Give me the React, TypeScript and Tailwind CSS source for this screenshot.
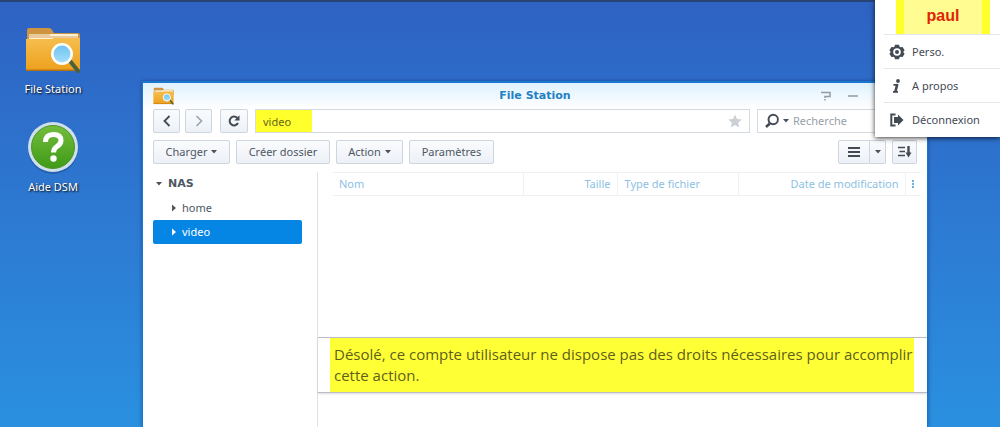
import type { ReactNode } from 'react';

interface ToolButtonProps {
  children: ReactNode;
  label?: string;
  className?: string;
}

const ToolButton = ({ children, label, className = '' }: ToolButtonProps) => (
  <button
    aria-label={label}
    className={`flex h-6 items-center justify-center gap-1 rounded-xs border border-[#cdd5df] bg-linear-to-b from-[#fafbfd] to-[#edf1f7] text-[#4e5762] ${className}`}
  >
    {children}
  </button>
);

const Caret = ({ className = 'fill-[#4a525c]' }: { className?: string }) => (
  <svg viewBox="0 0 6 4" className={`h-1 w-1.5 shrink-0 ${className}`}>
    <path d="M0 0h6L3 3.500z" />
  </svg>
);

const TreeArrow = () => (
  <svg viewBox="0 0 4 8" className="h-2 w-1 shrink-0 fill-current">
    <path d="M0 .5v7L4 4z" />
  </svg>
);

const FolderIcon = ({ className = '' }: { className?: string }) => (
  <svg viewBox="0 0 56 46" className={className}>
    <defs>
      <linearGradient id="folderFront" x1="0" y1="0" x2="0" y2="1">
        <stop offset="0%" stopColor="#f6be4e" />
        <stop offset="100%" stopColor="#eda01c" />
      </linearGradient>
      <linearGradient id="lens" x1="0" y1="0" x2="0" y2="1">
        <stop offset="0%" stopColor="#6cc1f1" />
        <stop offset="100%" stopColor="#a6e0fb" />
      </linearGradient>
    </defs>
    <path d="M2 3q0-2 2-2h20q2 0 3 2l2 3h24q2 0 2 2v12H2z" fill="#cf9440" />
    <path d="M4 7h49v8H4z" fill="#fff1d2" />
    <path d="M4 8h21M3 10h51" stroke="#d3a262" strokeWidth="1" />
    <path d="M1 12h26l2-1h26v31q0 2-2 2H3q-2 0-2-2z" fill="url(#folderFront)" />
    <path d="M1 43.300h54" stroke="#b97312" strokeWidth="1.500" />
    <path d="M45 34l8 10" stroke="#47603f" strokeWidth="4" strokeLinecap="round" />
    <circle cx="37" cy="27" r="9.700" fill="url(#lens)" stroke="#fffdf4" strokeWidth="2.600" />
  </svg>
);

const HelpIcon = () => (
  <svg viewBox="0 0 52 54" className="h-[54px] w-[52px]">
    <defs>
      <linearGradient id="helpFill" x1="0" y1="0" x2="0" y2="1">
        <stop offset="0%" stopColor="#74bd3c" />
        <stop offset="100%" stopColor="#3f9a18" />
      </linearGradient>
    </defs>
    <circle cx="26" cy="28" r="25" fill="#1b4a94" opacity=".5" />
    <circle cx="26" cy="26" r="25" fill="#cfe0ea" />
    <circle cx="26" cy="26" r="21.500" fill="url(#helpFill)" stroke="#4c962c" strokeWidth="1" />
    <path d="M18.500 21q0-7.500 8-7.500 7.500 0 7.500 6 0 3.500-3.500 5.500-4 2.500-4 6.500" fill="none" stroke="#fff" strokeWidth="5" />
    <circle cx="26.500" cy="37.500" r="3.200" fill="#fff" />
  </svg>
);

const GearIcon = () => (
  <svg viewBox="0 0 16 16" className="h-4 w-4 shrink-0">
    <path
      fillRule="evenodd"
      fill="#434a54"
      d="M6 .8h4l.6 1.900 1 .6 2-.4 2 3.400-1.400 1.700 1.400 1.700-2 3.400-2-.4-1 .6-.6 1.900H6l-.6-1.900-1-.6-2 .4-2-3.400L1.800 8 .4 6.300l2-3.400 2 .4 1-.6zM8 4.200a3.800 3.800 0 1 0 0 7.600 3.800 3.800 0 0 0 0-7.600z"
    />
    <circle cx="8" cy="8" r="2" fill="#434a54" />
  </svg>
);

const InfoIcon = () => (
  <svg viewBox="0 0 16 16" className="h-4 w-4 shrink-0" fill="none" stroke="#434a54">
    <circle cx="9" cy="3" r="1.900" fill="#434a54" stroke="none" />
    <path d="M4.500 6.800H8M4 13.800h5" strokeWidth="1.800" />
    <path d="M8.300 6l-2 8" strokeWidth="2.600" />
  </svg>
);

const LogoutIcon = () => (
  <svg viewBox="0 0 16 16" className="h-4 w-4 shrink-0">
    <path d="M6.500 2.500H2.300v11h4.200" fill="none" stroke="#434a54" strokeWidth="2" />
    <path d="M5 5h4V2.500L14.500 8 9 13.500V11H5z" fill="#434a54" />
  </svg>
);

const accountItems = [
  { label: 'Perso.', icon: GearIcon },
  { label: 'A propos', icon: InfoIcon },
  { label: 'Déconnexion', icon: LogoutIcon },
];

const AccountMenu = () => (
  <nav className="absolute top-0 right-0 z-20 w-[125px] bg-white pb-px pl-[9px] shadow-[0_1px_5px_rgba(0,0,0,0.8)]">
    <div className="mr-2.5 ml-3 flex h-[34px] justify-center border-x-8 border-[#ffff2c] bg-[#fffd92] font-['Liberation_Sans',sans-serif] text-base leading-8 font-bold text-[#e02408]">
      paul
    </div>
    <ul>
      {accountItems.map(({ label, icon: Icon }) => (
        <li key={label} className="border-t border-[#e3e6ea]">
          <button className="flex h-[33px] w-full items-center gap-[7px] pl-[5px] text-[#434a54]">
            <Icon />
            {label}
          </button>
        </li>
      ))}
    </ul>
  </nav>
);

const DesktopShortcuts = () => (
  <div className="absolute top-[27px] left-[13px] flex w-20 flex-col gap-6 text-white [text-shadow:1px_1px_2px_#000]">
    <a href="#file-station" className="flex flex-col items-center gap-2">
      <FolderIcon className="h-[46px] w-14" />
      <span>File Station</span>
    </a>
    <a href="#aide" className="flex flex-col items-center gap-1">
      <HelpIcon />
      <span>Aide DSM</span>
    </a>
  </div>
);

const TitleBar = () => (
  <header className="grid h-[26px] grid-cols-[1fr_auto_1fr] items-center bg-linear-to-b from-[#dff2fd] to-white px-2.5">
    <FolderIcon className="h-[18px] w-[21px]" />
    <h1 className="font-['DejaVu_Sans',Verdana,sans-serif] font-bold text-[#2380c4]">File Station</h1>
    <div className="flex items-center justify-end gap-4 pr-[58px] text-[#929ba5]">
      <button aria-label="Aide">
        <svg viewBox="0 0 12 10" className="h-2.5 w-3" fill="none" stroke="currentColor" strokeWidth="1.500">
          <path d="M2 1.500h9v4H6V7M6 8v1.500" />
        </svg>
      </button>
      <button aria-label="Réduire">
        <svg viewBox="0 0 12 10" className="h-2.5 w-3" stroke="currentColor" strokeWidth="1.500">
          <path d="M1 5h10" />
        </svg>
      </button>
    </div>
  </header>
);

const PathBar = () => (
  <div className="flex h-6 px-2.5">
    <ToolButton label="Précédent" className="w-[27px]">
      <svg viewBox="0 0 12 12" className="h-3 w-3" fill="none" stroke="#434a54" strokeWidth="1.800">
        <path d="M8.500 1L3.500 6l5 5" />
      </svg>
    </ToolButton>
    <ToolButton label="Suivant" className="ml-[5px] w-[27px]">
      <svg viewBox="0 0 12 12" className="h-3 w-3" fill="none" stroke="#9aa2ac" strokeWidth="1.600">
        <path d="M3.500 1l5 5-5 5" />
      </svg>
    </ToolButton>
    <ToolButton label="Actualiser" className="ml-2 w-7">
      <svg viewBox="0 0 12 12" className="h-3 w-3" fill="none" stroke="#434a54" strokeWidth="2">
        <path d="M9.300 3A4.400 4.400 0 1 0 10 8" />
        <path d="M11.500.3v5.200H6.300z" fill="#434a54" stroke="none" />
      </svg>
    </ToolButton>
    <div className="ml-[7px] flex flex-1 items-center border border-[#d5dae0] bg-white pr-1.5">
      <input
        aria-label="Chemin"
        defaultValue="video"
        className="h-full w-14 bg-[#ffff2c] pl-[7px] text-[#66661c] outline-none"
      />
      <button aria-label="Favoris" className="ml-auto">
        <svg viewBox="0 0 16 16" className="h-4 w-4 fill-[#cbd0d6]">
          <path d="M8 1.500l2 4.600 4.800.4-3.700 3.200 1.200 4.800L8 11.900l-4.300 2.600 1.200-4.800L1.200 6.500 6 6.100z" />
        </svg>
      </button>
    </div>
    <div className="ml-[7px] flex w-40 items-center gap-1 border border-[#d5dae0] bg-white pl-[7px]">
      <svg viewBox="0 0 14 16" className="h-4 w-3.5 shrink-0" fill="none" stroke="#434a54">
        <circle cx="8.200" cy="6.500" r="4.700" strokeWidth="1.900" />
        <path d="M4.800 10.500L1 14" strokeWidth="2.600" />
      </svg>
      <Caret />
      <input
        aria-label="Recherche"
        placeholder="Recherche"
        className="w-full min-w-0 outline-none placeholder:text-[#98a0a8]"
      />
    </div>
  </div>
);

const Toolbar = () => (
  <div className="flex gap-1.5 px-2.5 pt-[7px] pb-2">
    <ToolButton className="w-[77px]">
      Charger <Caret />
    </ToolButton>
    <ToolButton className="w-[94px]">Créer dossier</ToolButton>
    <ToolButton className="w-[67px]">
      Action <Caret />
    </ToolButton>
    <ToolButton className="w-[85px]">Paramètres</ToolButton>
    <div className="ml-auto flex">
      <ToolButton label="Affichage en liste" className="w-8 rounded-r-none">
        <svg viewBox="0 0 12 10" className="h-2.5 w-3" stroke="#434a54" strokeWidth="2">
          <path d="M0 1h12M0 5h12M0 9h12" />
        </svg>
      </ToolButton>
      <ToolButton label="Mode d'affichage" className="w-4 rounded-l-none border-l-0">
        <Caret />
      </ToolButton>
    </div>
    <ToolButton label="Trier" className="w-[25px]">
      <svg viewBox="0 0 14 12" className="h-3 w-3.5 shrink-0" stroke="#434a54" strokeWidth="1.600" fill="none">
        <path d="M0 1.500h7M1.500 5.500H7M0 9.500h7" />
        <path d="M10.500 0v8" strokeWidth="2.400" />
        <path d="M7.500 6.500h6l-3 5z" fill="#434a54" stroke="none" />
      </svg>
    </ToolButton>
  </div>
);

const Sidebar = () => (
  <aside className="w-[175px] shrink-0 border-r border-[#dfe3e8] pr-[15px] pl-2.5 text-[#4e5762]">
    <button className="flex h-6 w-full items-center gap-1.5 pl-[3px] font-['DejaVu_Sans',Verdana,sans-serif] font-bold">
      <Caret />
      NAS
    </button>
    <button className="flex h-6 w-full items-center gap-1.5 pl-[19px]">
      <TreeArrow />
      home
    </button>
    <button className="flex h-6 w-full items-center gap-1.5 rounded-xs bg-[#0586e5] pl-[19px] text-white">
      <TreeArrow />
      video
    </button>
  </aside>
);

const FileTable = () => (
  <table className="h-6 w-full table-fixed border-y border-[#eff1f4] text-[#8cbfe2]">
    <thead>
      <tr className="text-left [&>th]:border-r [&>th]:border-[#eff1f4] [&>th]:font-normal">
        <th className="pl-1.5">Nom</th>
        <th className="w-[94px] pr-1.5 text-right">Taille</th>
        <th className="w-[121px] pl-[7px]">Type de fichier</th>
        <th className="w-[167px] pr-1.5 text-right">Date de modification</th>
        <th className="w-4 border-r-0!">
          <button aria-label="Colonnes" className="flex w-full justify-center">
            <svg viewBox="0 0 2 8" className="h-2 w-0.5 fill-[#6ab0dc]">
              <path d="M0 0h2v2H0zM0 3h2v2H0zM0 6h2v2H0z" />
            </svg>
          </button>
        </th>
      </tr>
    </thead>
  </table>
);

const PermissionMessage = () => (
  <div
    role="alert"
    className="absolute top-[165px] right-0 left-0 border-y border-[#b9bcc8] bg-white pr-[13px] pl-3 shadow-[0_1px_2px_rgba(0,0,0,0.15)]"
  >
    <p className="bg-[#ffff36] py-1.5 pl-1 font-['Open_Sans',Verdana,sans-serif] text-[15px] leading-[21px] text-[#5f5f1c]">
      Désolé, ce compte utilisateur ne dispose pas des droits nécessaires pour accomplir cette action.
    </p>
  </div>
);

export default function App() {
  return (
    <main className="relative min-h-screen overflow-hidden bg-linear-to-b from-[#2e62c3] to-[#2a90df] font-['Noto_Sans',Verdana,sans-serif] text-[11px] leading-4">
      <div className="h-0.5 bg-[#294374]" />
      <DesktopShortcuts />
      <section className="absolute top-[81px] right-[72px] bottom-0 left-[142px] flex flex-col border-x border-t-2 border-[#1977cf] bg-white shadow-[0_0_4px_rgba(0,30,90,0.4)]">
        <TitleBar />
        <PathBar />
        <Toolbar />
        <div className="flex flex-1">
          <Sidebar />
          <div className="relative min-w-0 flex-1">
            <div className="pr-1.5 pl-[15px]">
              <FileTable />
            </div>
            <PermissionMessage />
          </div>
        </div>
      </section>
      <AccountMenu />
    </main>
  );
}
